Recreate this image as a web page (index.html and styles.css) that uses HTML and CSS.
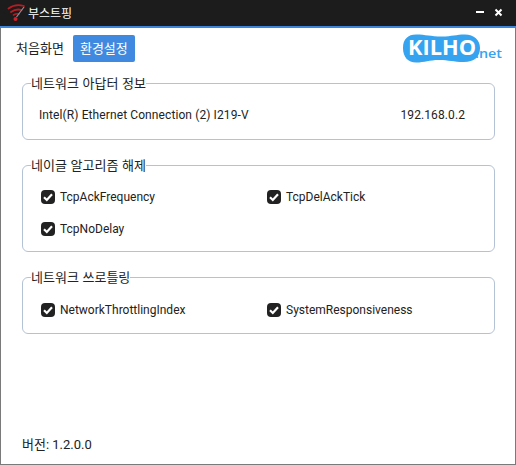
FILE: index.html
```html
<!DOCTYPE html>
<html lang="ko">
<head>
<meta charset="utf-8">
<title>부스트핑</title>
<link rel="stylesheet" href="styles.css">
</head>
<body>
<div class="window">
  <header class="titlebar">
    <svg class="app-icon" width="20" height="20" viewBox="0 0 20 20" fill="none">
      <path d="M1.500 6.500C6 3 12 2.500 17 4" stroke="#b81c22" stroke-width="1.800" stroke-linecap="round"/>
      <path d="M4 10C7.500 7.500 11 7 14.500 8" stroke="#b81c22" stroke-width="1.800" stroke-linecap="round"/>
      <path d="M6.500 13C8.500 11.800 10.500 11.500 12 12" stroke="#b81c22" stroke-width="1.600" stroke-linecap="round"/>
      <circle cx="8.500" cy="17" r="2" fill="#d0222a"/>
      <path d="M9.500 15L17 5" stroke="#8a8f96" stroke-width="1.200"/>
    </svg>
    <span class="app-title">부스트핑</span>
    <div class="win-buttons">
      <span class="win-min"></span>
      <svg class="win-close" width="9" height="9" viewBox="0 0 9 9"><path d="M1.500 1.500L7.500 7.500M7.500 1.500L1.500 7.500" stroke="#fff" stroke-width="2"/></svg>
    </div>
  </header>
  <main class="content">
    <nav class="topnav">
      <a class="tab">처음화면</a>
      <a class="tab active">환경설정</a>
      <svg class="logo" width="100" height="30" viewBox="0 0 100 30">
        <path d="M0 14C0 5 5 .5 13 .5C23 .5 27 2.500 39 2.500C49 2.500 53 .5 62 .5C71 .5 77 6 77 14C77 23 71 28 61 28C50 28 46 26 36 26C26 26 22 28.500 13 28.500C5 28.500 0 23 0 14Z" fill="#36a3f0"/>
        <text class="logo-main" x="5" y="21" textLength="68" lengthAdjust="spacingAndGlyphs">KILHO</text>
        <text class="logo-net" x="72" y="24" textLength="27" lengthAdjust="spacingAndGlyphs">.net</text>
      </svg>
    </nav>
    <fieldset class="group adapter">
      <legend>네트워크 아답터 정보</legend>
      <div class="adapter-row">
        <span>Intel(R) Ethernet Connection (2) I219-V</span>
        <span class="ip">192.168.0.2</span>
      </div>
    </fieldset>
    <fieldset class="group nagle">
      <legend>네이글 알고리즘 해제</legend>
      <div class="checks">
        <label class="check"><span class="box"><svg width="14" height="14" viewBox="0 0 14 14"><path d="M3 7.300L5.800 10L11 4.300" fill="none" stroke="#fff" stroke-width="2.200"/></svg></span>TcpAckFrequency</label>
        <label class="check"><span class="box"><svg width="14" height="14" viewBox="0 0 14 14"><path d="M3 7.300L5.800 10L11 4.300" fill="none" stroke="#fff" stroke-width="2.200"/></svg></span>TcpDelAckTick</label>
        <label class="check"><span class="box"><svg width="14" height="14" viewBox="0 0 14 14"><path d="M3 7.300L5.800 10L11 4.300" fill="none" stroke="#fff" stroke-width="2.200"/></svg></span>TcpNoDelay</label>
      </div>
    </fieldset>
    <fieldset class="group throttle">
      <legend>네트워크 쓰로틀링</legend>
      <div class="checks">
        <label class="check"><span class="box"><svg width="14" height="14" viewBox="0 0 14 14"><path d="M3 7.300L5.800 10L11 4.300" fill="none" stroke="#fff" stroke-width="2.200"/></svg></span>NetworkThrottlingIndex</label>
        <label class="check"><span class="box"><svg width="14" height="14" viewBox="0 0 14 14"><path d="M3 7.300L5.800 10L11 4.300" fill="none" stroke="#fff" stroke-width="2.200"/></svg></span>SystemResponsiveness</label>
      </div>
    </fieldset>
    <footer class="version">버전: 1.2.0.0</footer>
  </main>
</div>
</body>
</html>
```
FILE: styles.css
```css
* { box-sizing: border-box; }
html, body { margin: 0; padding: 0; height: 100%; }
body {
  font-family: Roboto, "Noto Sans CJK KR", sans-serif;
  font-size: 12px;
  color: #222;
  background: #fff;
}
.window {
  width: 516px;
  height: 465px;
  display: flex;
  flex-direction: column;
  border: 1px solid #7a7a7a;
  border-top: 0;
}
.titlebar {
  flex: none;
  height: 28px;
  margin: 0 -1px;
  padding: 0 13px 2px 7px;
  display: flex;
  align-items: center;
  background: #1c1c1c;
  border-bottom: 2px solid #3d85d8;
  color: #fff;
}
.app-icon { flex: none; margin-right: 1px; }
.app-title { font-family: "Noto Sans CJK KR", sans-serif; font-size: 12px; }
.win-buttons { margin-left: auto; display: flex; align-items: center; gap: 10px; }
.win-min { width: 8px; height: 2px; background: #fff; }
.win-close { display: block; }
.content {
  flex: 1;
  display: flex;
  flex-direction: column;
  padding: 0 20px 0 21px;
  min-height: 0;
}
.topnav {
  display: flex;
  align-items: center;
  height: 36px;
  margin: 2px -20px 0 -21px;
  padding-left: 15px;
}
.tab {
  font-family: "Noto Sans CJK KR", sans-serif;
  font-size: 13px;
  color: #222;
  margin-right: 9px;
  line-height: 26px;
}
.tab.active {
  width: 62px;
  height: 27px;
  line-height: 26px;
  text-align: center;
  color: #fff;
  background: #3f8ae0;
  border-radius: 2px;
}
.logo { align-self: flex-start; margin: 4px 12px 0 auto; }
.logo-main { font-family: "Open Sans", sans-serif; font-weight: 700; font-size: 21px; fill: #fff; }
.logo-net { font-family: "Open Sans", sans-serif; font-weight: 600; font-size: 13px; fill: #36a3f0; }
.group {
  margin: 0;
  padding: 0;
  border: 1px solid #b4c2d6;
  border-radius: 6px;
  min-width: 0;
}
.group legend {
  font-family: "Noto Sans CJK KR", sans-serif;
  font-size: 13px;
  line-height: 14px;
  margin-left: 8px;
  padding: 0;
  color: #222;
}
.adapter { margin-top: 10px; height: 64px; }
.adapter-row {
  display: flex;
  padding: 16px 29px 0 16px;
  line-height: 18px;
  letter-spacing: .1px;
}
.ip { margin-left: auto; }
.nagle { margin-top: 18px; height: 94px; }
.throttle { margin-top: 18px; height: 64px; }
.checks {
  display: grid;
  grid-template-columns: 226px 1fr;
  row-gap: 14px;
  padding: 17px 0 0 18px;
}
.nagle .checks { padding-top: 16px; }
.check { display: flex; align-items: center; gap: 5px; height: 18px; }
.box {
  flex: none;
  width: 14px;
  height: 14px;
  background: #222;
  border-radius: 4px;
  display: block;
}
.box svg { display: block; }
.version {
  margin-top: auto;
  padding-bottom: 12px;
  font-size: 13px;
  line-height: 14px;
}
```
